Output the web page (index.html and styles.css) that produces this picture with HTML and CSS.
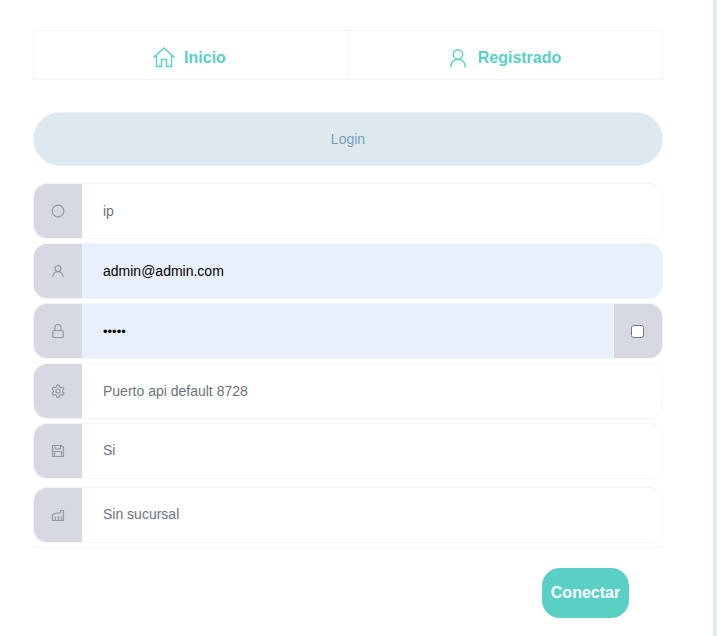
FILE: index.html
```html
<!DOCTYPE html>
<html lang="es">
<head>
<meta charset="utf-8">
<title>Login</title>
<link rel="stylesheet" href="styles.css">
</head>
<body>
<div class="page">
  <main class="panel">
    <nav class="tabs">
      <a class="tab">
        <svg class="tab-icon" viewBox="0 0 22 22"><path d="M.8 10.600 11 .9l10.200 9.700M3.500 8.500V19.500h5V12.500h5v7h5V8.500"/></svg>
        <span>Inicio</span>
      </a>
      <a class="tab">
        <svg class="tab-icon" viewBox="0 0 22 22"><circle cx="11" cy="7.400" r="4.700"/><path d="M3.700 20.500c0-5 2.800-8.300 7.300-8.300s7.300 3.300 7.300 8.300"/></svg>
        <span>Registrado</span>
      </a>
    </nav>
    <div class="title">Login</div>
    <form class="fields">
      <div class="row">
        <span class="addon"><svg class="icon" viewBox="0 0 14 14"><circle cx="7" cy="7" r="5.800"/></svg></span>
        <span class="value placeholder">ip</span>
      </div>
      <div class="row filled">
        <span class="addon"><svg class="icon" viewBox="0 0 14 14"><circle cx="7" cy="4.600" r="3"/><path d="M1.800 13c0-3.200 2.200-5.300 5.200-5.300s5.200 2.100 5.200 5.300"/></svg></span>
        <span class="value">admin@admin.com</span>
      </div>
      <div class="row filled">
        <span class="addon"><svg class="icon" viewBox="0 0 14 14"><rect x="1.800" y="6.500" width="10.400" height="7" rx="1"/><path d="M4 6.500V3.500a3 3 0 0 1 6 0v3"/></svg></span>
        <span class="value dots">•••••</span>
        <span class="addon addon-end"><input class="check" type="checkbox" aria-label="Mostrar"></span>
      </div>
      <div class="row">
        <span class="addon"><svg class="icon" viewBox="0 0 24 24"><g class="gear"><circle cx="12" cy="12" r="3.500"/><path d="M10 2h4l.7 3 2.300 1.300 3-.9 2 3.500-2.200 2.100v2.600l2.200 2.100-2 3.500-3-.9-2.300 1.300-.7 3h-4l-.7-3-2.300-1.300-3 .9-2-3.500 2.200-2.100v-2.600L2 8.900l2-3.500 3 .9 2.300-1.300z"/></g></svg></span>
        <span class="value placeholder">Puerto api default 8728</span>
      </div>
      <div class="row">
        <span class="addon"><svg class="icon" viewBox="0 0 14 14"><path d="M1.500 1.500h9l2 2v9h-11z"/><path d="M4 1.500v3.500h5.500V1.500M3.500 12.500v-5h7v5"/></svg></span>
        <span class="value value-select placeholder">Si</span>
      </div>
      <div class="row row-select">
        <span class="addon"><svg class="icon" viewBox="0 0 14 14"><path d="M1.500 12.500V6.500L6 5h3.500V2.500h3v10z"/><path d="M4.500 12.500V8.500M7.500 12.500V8.500M10.500 12.500V8.500"/></svg></span>
        <span class="value value-select placeholder">Sin sucursal</span>
      </div>
    </form>
    <footer class="actions">
      <button class="submit" type="button">Conectar</button>
    </footer>
  </main>
  <div class="scroll-track"></div>
</div>
</body>
</html>
```
FILE: styles.css
```css
* {
  box-sizing: border-box;
}

html,
body {
  margin: 0;
  height: 100%;
  background: #fff;
  font-family: "Liberation Sans", Arial, sans-serif;
}

.page {
  display: flex;
  height: 636px;
  overflow: hidden;
}

.panel {
  width: 713px;
  padding: 30px 50px 0 33px;
}

.scroll-track {
  width: 4px;
  background: #e0ecea;
}

.tabs {
  display: grid;
  grid-template-columns: 1fr 1fr;
  height: 50px;
  border: 1px solid #f3f4f5;
}

.tab {
  display: flex;
  align-items: center;
  justify-content: center;
  gap: 9px;
  padding: 6px 3px 0 0;
  color: #5ad0c5;
  font-size: 16px;
  font-weight: 700;
}

.tab + .tab {
  border-left: 1px solid #f3f4f5;
}

.tab-icon {
  width: 22px;
  height: 22px;
  fill: none;
  stroke: #5ad0c5;
  stroke-width: 1.400;
}

.title {
  display: flex;
  align-items: center;
  justify-content: center;
  height: 54px;
  margin-top: 32px;
  border: 1px solid #e8eef2;
  border-radius: 27px;
  background: #dee8ef;
  color: #7a9fbb;
  font-size: 14px;
}

.fields {
  display: flex;
  flex-direction: column;
  gap: 4px;
  margin-top: 17px;
  padding-bottom: 4px;
  border-bottom: 1px solid #f3f4f5;
}

.row {
  display: flex;
  align-items: stretch;
  height: 56px;
  overflow: hidden;
  border: 1px solid #f3f4f5;
  border-radius: 14px;
}

.row-select {
  margin-top: 4px;
}

.filled {
  background: #e8f0fe;
}

.addon {
  display: flex;
  flex: none;
  align-items: center;
  justify-content: center;
  width: 48px;
  background: #d6d9e2;
}

.addon-end {
  width: 49px;
  padding-right: 1px;
  border-left: 1px solid #f3f4f5;
}

.icon {
  width: 14px;
  height: 14px;
  fill: none;
  stroke: #96989e;
  stroke-width: 1.200;
}

.gear {
  stroke-width: 2;
}

.value {
  display: flex;
  flex: 1;
  align-items: center;
  padding-left: 21px;
  color: #000;
  font-size: 14px;
}

.value-select {
  padding-bottom: 2px;
}

.placeholder {
  color: #6c757d;
}

.dots {
  font-size: 13px;
}

.check {
  width: 13px;
  height: 13px;
  margin: 0;
}

.actions {
  display: flex;
  justify-content: flex-end;
  padding: 20px 34px 0 0;
}

.submit {
  width: 87px;
  height: 50px;
  padding: 0;
  border: 0;
  border-radius: 18px;
  background: #5ad0c5;
  color: #fff;
  font-family: inherit;
  font-size: 16px;
  font-weight: 700;
}
```
